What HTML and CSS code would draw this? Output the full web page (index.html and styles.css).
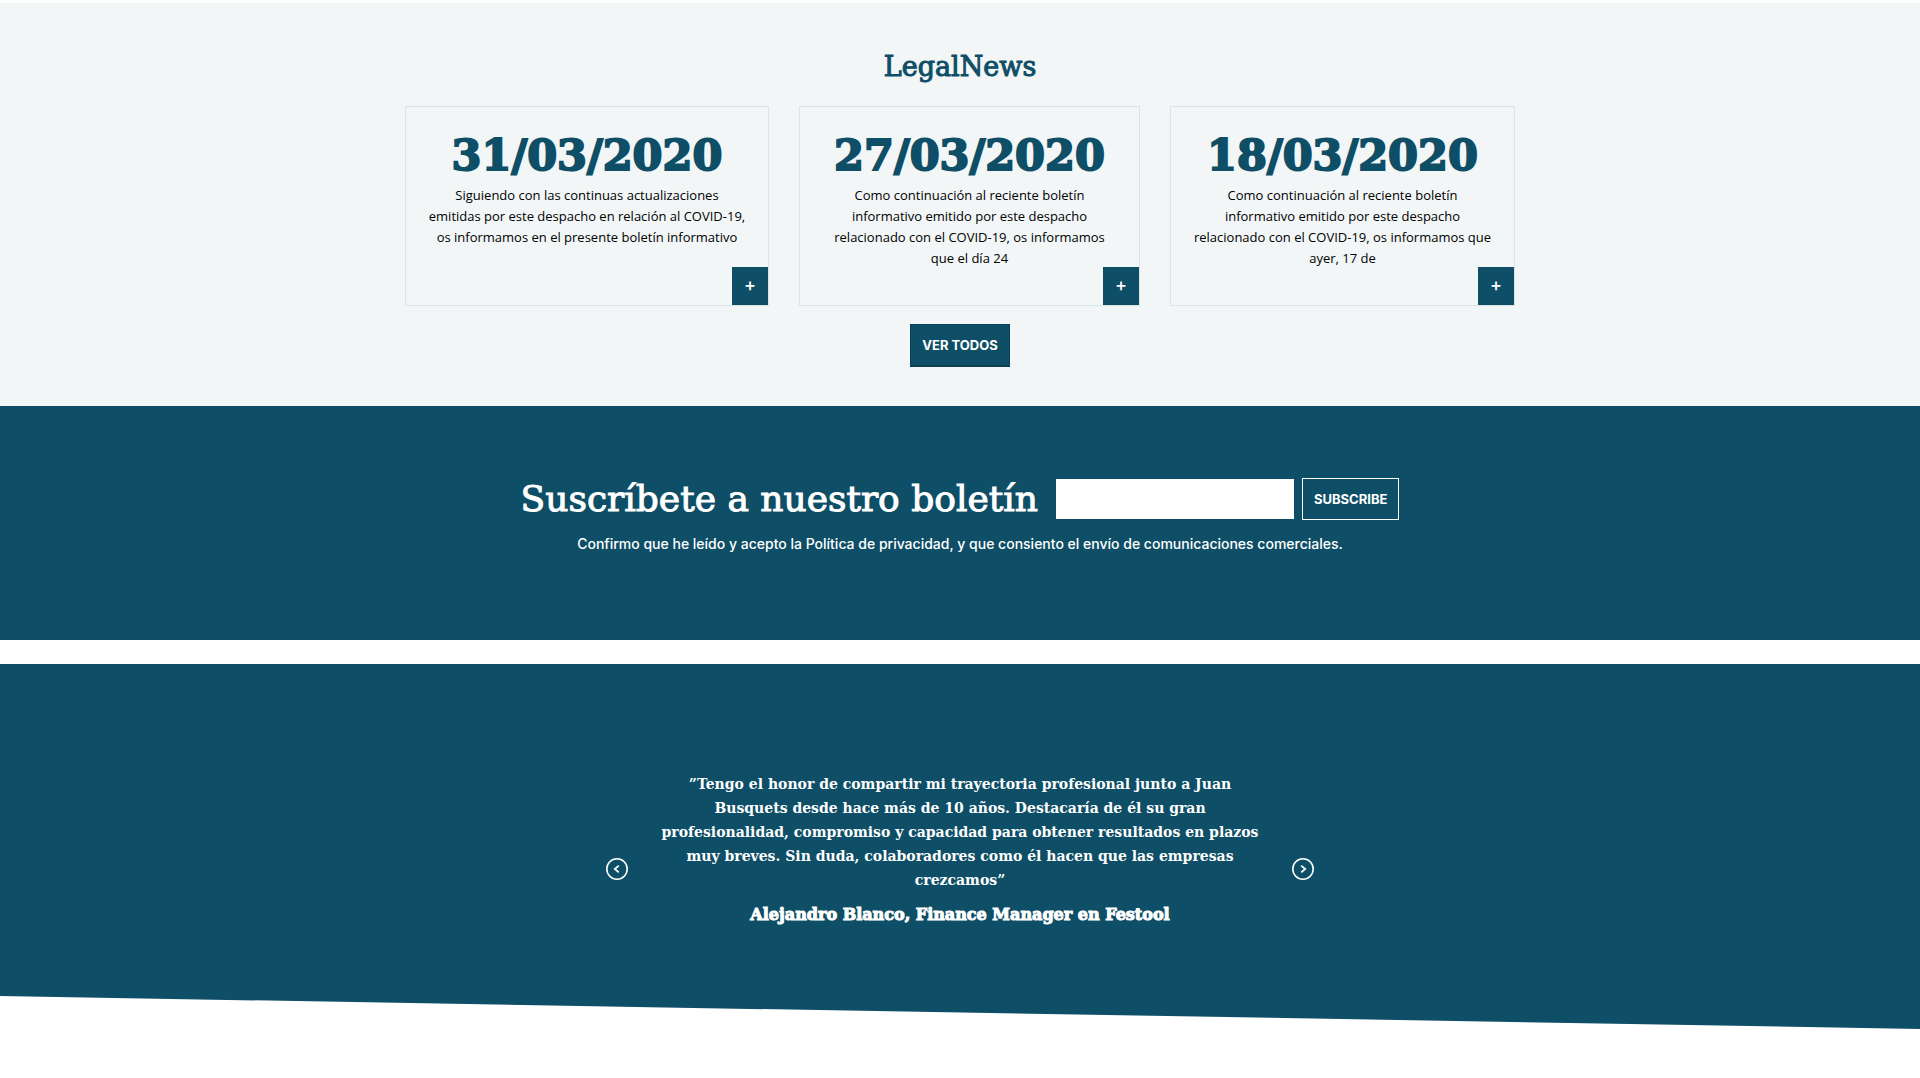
FILE: index.html
```html
<!DOCTYPE html>
<html lang="es">
<head>
<meta charset="utf-8">
<meta name="viewport" content="width=device-width, initial-scale=1">
<title>LegalNews</title>
<link rel="stylesheet" href="styles.css">
</head>
<body>
<main>
  <section class="news">
    <h2 class="news-title">LegalNews</h2>
    <div class="cards">
      <article class="card">
        <h3 class="card-date">31/03/2020</h3>
        <p class="card-text">Siguiendo con las continuas actualizaciones<br>emitidas por este despacho en relación al COVID-19,<br>os informamos en el presente boletín informativo</p>
        <a class="card-more" href="#">+</a>
      </article>
      <article class="card">
        <h3 class="card-date">27/03/2020</h3>
        <p class="card-text">Como continuación al reciente boletín<br>informativo emitido por este despacho<br>relacionado con el COVID-19, os informamos<br>que el día 24</p>
        <a class="card-more" href="#">+</a>
      </article>
      <article class="card">
        <h3 class="card-date">18/03/2020</h3>
        <p class="card-text">Como continuación al reciente boletín<br>informativo emitido por este despacho<br>relacionado con el COVID-19, os informamos que<br>ayer, 17 de</p>
        <a class="card-more" href="#">+</a>
      </article>
    </div>
    <a class="button button-solid" href="#">VER TODOS</a>
  </section>

  <section class="newsletter">
    <form class="subscribe">
      <label class="subscribe-title" for="email">Suscríbete a nuestro boletín</label>
      <input class="subscribe-input" id="email" type="email">
      <button class="button button-outline" type="submit">SUBSCRIBE</button>
    </form>
    <p class="consent">Confirmo que he leído y acepto la <a href="#">Política de privacidad</a>, y que consiento el envío de comunicaciones comerciales.</p>
  </section>

  <section class="testimonials">
    <div class="slider">
      <button class="arrow" type="button" aria-label="Anterior">
        <svg viewBox="0 0 22 22" width="22" height="22" fill="none" stroke="currentColor"><circle cx="11" cy="11" r="10.2" stroke-width="1.6"/><path d="M12.8 7.6 8.8 11l4 3.4" stroke-width="1.8"/></svg>
      </button>
      <figure class="quote">
        <blockquote class="quote-text">”Tengo el honor de compartir mi trayectoria profesional junto a Juan<br>Busquets desde hace más de 10 años. Destacaría de él su gran<br>profesionalidad, compromiso y capacidad para obtener resultados en plazos<br>muy breves. Sin duda, colaboradores como él hacen que las empresas<br>crezcamos”</blockquote>
        <figcaption class="quote-author">Alejandro Blanco, Finance Manager en Festool</figcaption>
      </figure>
      <button class="arrow" type="button" aria-label="Siguiente">
        <svg viewBox="0 0 22 22" width="22" height="22" fill="none" stroke="currentColor"><circle cx="11" cy="11" r="10.2" stroke-width="1.6"/><path d="m9.2 7.6 4 3.4-4 3.4" stroke-width="1.8"/></svg>
      </button>
    </div>
  </section>
</main>
</body>
</html>
```
FILE: styles.css
```css
:root {
  --blue: #0e4e66;
  --blue-dark: #0b3f54;
  --pale: #f2f6f7;
  --line: #d8e4e5;
  --slab: "DejaVu Serif", serif;
  --sans: Inter, sans-serif;
}

* {
  box-sizing: border-box;
}

body {
  margin: 0;
  padding: 3px 0 48px;
  background: #fff;
  color: #000;
  font-family: var(--sans);
}

h2, h3, p, figure, blockquote {
  margin: 0;
}

a {
  color: inherit;
  text-decoration: none;
}

.button {
  display: inline-block;
  padding: 0 11px;
  color: #fff;
  font: 700 13px/40px var(--sans);
  text-align: center;
}

.button-solid {
  border: 1px solid var(--blue-dark);
  border-bottom-width: 2px;
  background: var(--blue);
}

.button-outline {
  border: 1px solid #fff;
  background: none;
}

/* News */
.news {
  display: flex;
  flex-direction: column;
  align-items: center;
  padding: 48px 20px 39px;
  background: var(--pale);
}

.news-title {
  margin-bottom: 23px;
  color: var(--blue);
  font: 400 27px/32px var(--slab);
  -webkit-text-stroke: 1px var(--blue);
}

.cards {
  display: grid;
  grid-template-columns: 364fr 341fr 345fr;
  gap: 30px;
  width: 100%;
  max-width: 1110px;
  margin-bottom: 18px;
}

.card {
  position: relative;
  padding: 23px 8px 36px;
  border: 1px solid var(--line);
  text-align: center;
}

.card-date {
  margin-bottom: 5px;
  color: var(--blue);
  font: 700 43px/50px var(--slab);
  -webkit-text-stroke: 2px var(--blue);
}

.card-text {
  font: 400 13px/21px "Open Sans", sans-serif;
}

.card-more {
  position: absolute;
  right: 0;
  bottom: 0;
  width: 36px;
  background: var(--blue);
  color: #fff;
  font: 500 18px/36px var(--sans);
  padding-bottom: 2px;
}

/* Newsletter */
.newsletter {
  padding: 72px 20px 85px;
  background: var(--blue);
  color: #fff;
  text-align: center;
}

.subscribe {
  display: flex;
  flex-wrap: wrap;
  justify-content: center;
  align-items: center;
  gap: 8px;
  margin-bottom: 13px;
}

.subscribe-title {
  margin-right: 10px;
  font: 400 36px/40px var(--slab);
  -webkit-text-stroke: 1px #fff;
}

.subscribe-input {
  width: 238px;
  height: 40px;
  padding: 0 12px;
  border: 0;
  background: #fff;
  font: 400 14px/20px var(--sans);
}

.consent {
  font: 500 14px/22px var(--sans);
}

/* Testimonials */
.testimonials {
  margin-top: 24px;
  padding: 108px 20px 64px;
  background: var(--blue);
  color: #fff;
  clip-path: polygon(0 0, 100% 0, 100% 100%, 0 calc(100% - 33px));
}

.slider {
  display: flex;
  justify-content: space-between;
  align-items: center;
  max-width: 708px;
  margin: 0 auto;
}

.arrow {
  display: flex;
  padding: 0;
  border: 0;
  background: none;
  color: #fff;
}

.quote {
  padding-bottom: 38px;
  text-align: center;
}

.quote-text {
  margin-bottom: 11px;
  font: 700 14px/24px var(--slab);
}

.quote-author {
  font: 700 16px/24px var(--slab);
  -webkit-text-stroke: 1px #fff;
}
```
